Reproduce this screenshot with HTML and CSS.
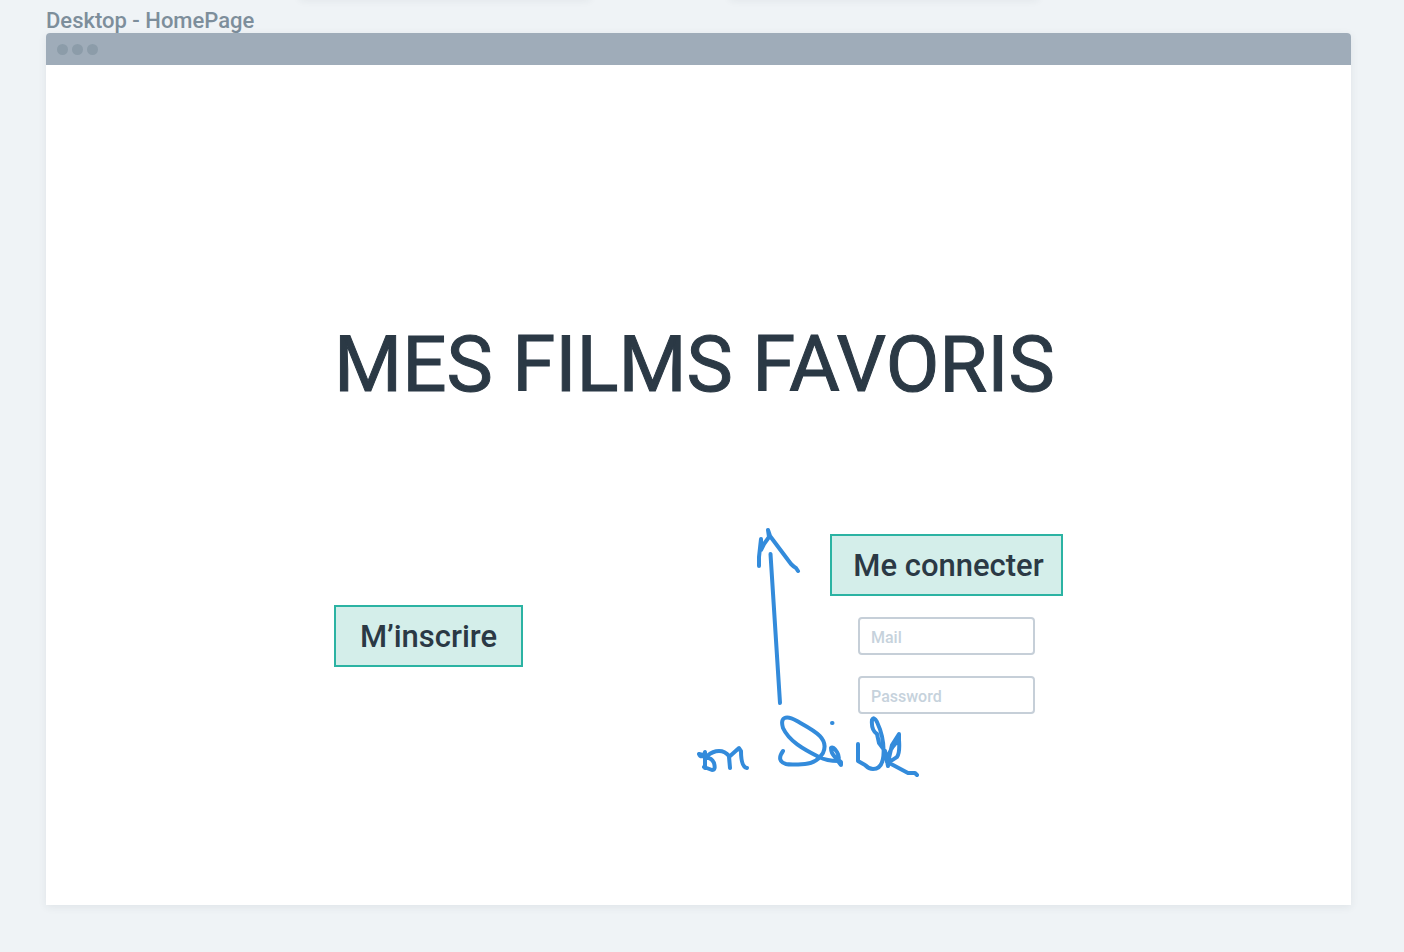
FILE: index.html
```html
<!DOCTYPE html>
<html lang="fr">
<head>
<meta charset="utf-8">
<title>Desktop - HomePage</title>
<link rel="stylesheet" href="styles.css">
</head>
<body>
<div class="shade shade-left"></div>
<div class="shade shade-right"></div>
<main class="board">
  <p class="board-label">Desktop - HomePage</p>
  <section class="window">
    <header class="window-bar">
      <span class="dot"></span><span class="dot"></span><span class="dot"></span>
    </header>
    <div class="page">
      <h1 class="title">MES FILMS FAVORIS</h1>
      <div class="actions">
        <button class="action signup" type="button">M’inscrire</button>
        <form class="login">
          <button class="action connect" type="button">Me connecter</button>
          <input class="field" type="email" placeholder="Mail" aria-label="Mail">
          <input class="field" type="password" placeholder="Password" aria-label="Password">
        </form>
        <svg class="sketch" viewBox="690 520 240 265" role="img" aria-label="on click">
          <path d="M780 703L777 656L770.500 554"/>
          <path d="M759 566V557L760 548L761 539V550L764 544L769 537L768 530L770 536L791 564Q794 567 796 568L798 571"/>
          <path d="M699 754Q700 757 704 756L705 752V768M699 754L707 756Q713 751 719 751Q725 751 729 756L730 768L729 757L739 748L741 751Q741 767 747 768M705 758Q711 757 714 763Q716 770 712 770L704 767"/>
          <path d="M783 751Q776 761 786 764Q790 765 805 764Q817 763 823 753C830 738 813 730 797 721C785 714 780 718 783 728C789 741 803 749 819 757Q827 761 838 761Q840 757 837 752Q833 746 831 748Q831 753 835 757L841 762V765L838 761"/>
          <path d="M832 723L832.500 723"/>
          <path d="M858 744V761L865 765Q869 769 873 769C888 769 885 739 877 722Q874 716 872 720Q871 730 877 734L879 743L885 751L888 766L889 754Q892 746 899 740V734L892 745L889 758M899 740Q900 753 897 757Q892 761 887 762L893 765L908 773L915 773L917 775"/>
        </svg>
      </div>
    </div>
  </section>
</main>
</body>
</html>
```
FILE: styles.css
```css
* {
  box-sizing: border-box;
}

body {
  margin: 0;
  min-height: 100vh;
  background: #eff3f6;
  color: #2b3945;
  font-family: Roboto, "Liberation Sans", sans-serif;
  overflow-x: hidden;
}

.board {
  display: flex;
  flex-direction: column;
  min-height: 100vh;
  padding: 8px 53px 47px 46px;
}

.board-label {
  margin: 0;
  height: 25px;
  color: #7d8e9b;
  font-size: 22px;
  font-weight: 500;
  line-height: 25px;
}

.window {
  display: flex;
  flex: 1;
  flex-direction: column;
  border-radius: 4px 4px 0 0;
  background: #fff;
  box-shadow: 0 2px 8px rgba(43, 57, 69, 0.08);
}

.window-bar {
  display: flex;
  align-items: center;
  gap: 4px;
  height: 32px;
  padding: 0 11px;
  border-radius: 4px 4px 0 0;
  background: #9facb9;
}

.dot {
  width: 11px;
  height: 11px;
  border-radius: 50%;
  background: #8c9ca9;
}

.page {
  display: flex;
  flex-direction: column;
  align-items: center;
  padding: 252px 24px 120px;
}

.title {
  margin: 0;
  padding-right: 8px;
  font-size: 78px;
  font-weight: 400;
  line-height: 96px;
  white-space: nowrap;
  -webkit-text-stroke: 1px currentColor;
}

.actions {
  position: relative;
  display: flex;
  align-items: flex-start;
  justify-content: space-between;
  width: 100%;
  max-width: 729px;
  margin-top: 121px;
}

.action {
  height: 62px;
  padding: 2px 0 0;
  border: 2px solid #2bb3a3;
  background: #d4eeea;
  color: #2b3945;
  font-family: inherit;
  font-size: 31px;
  font-weight: 500;
  line-height: 40px;
}

.signup {
  width: 189px;
  margin-top: 71px;
}

.connect {
  width: 233px;
  padding-left: 4px;
}

.login {
  display: flex;
  flex-direction: column;
  align-items: center;
  gap: 21px;
}

.field {
  width: 177px;
  height: 38px;
  padding: 2px 11px 0;
  border: 2px solid #c6cfd8;
  border-radius: 4px;
  background: #fff;
  color: #2b3945;
  font-family: inherit;
  font-size: 16px;
  font-weight: 500;
}

.field::placeholder {
  color: #c6d2dc;
  opacity: 1;
}

.sketch {
  position: absolute;
  top: -14px;
  left: 356px;
  width: 240px;
  height: 265px;
  fill: none;
  stroke: #338bdb;
  stroke-width: 4;
  stroke-linecap: round;
  stroke-linejoin: round;
  pointer-events: none;
}

.shade {
  position: absolute;
  top: -10px;
  height: 8px;
  box-shadow: 0 2px 8px rgba(43, 57, 69, 0.08);
}

.shade-left {
  left: 300px;
  width: 290px;
}

.shade-right {
  left: 730px;
  width: 308px;
}
```
